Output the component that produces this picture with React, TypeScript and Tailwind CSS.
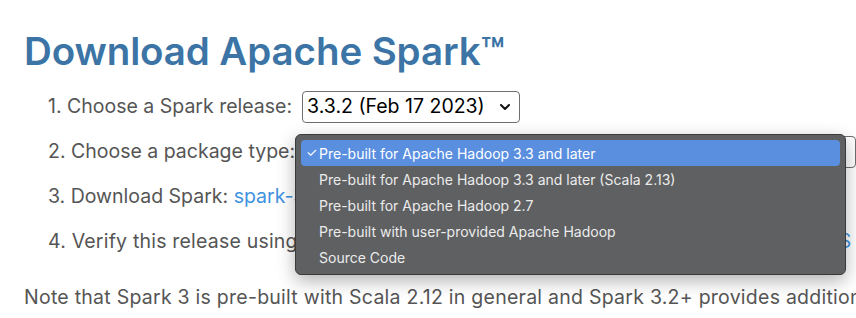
import React from "react";

const items = [
  "Pre-built for Apache Hadoop 3.3 and later",
  "Pre-built for Apache Hadoop 3.3 and later (Scala 2.13)",
  "Pre-built for Apache Hadoop 2.7",
  "Pre-built with user-provided Apache Hadoop",
  "Source Code",
];

function Chevron() {
  return (
    <svg width="12" height="8" viewBox="0 0 12 8" className="ml-auto">
      <path d="M2 2 L6 6 L10 2" fill="none" stroke="#111" strokeWidth="2" strokeLinecap="round" strokeLinejoin="round" />
    </svg>
  );
}

export default function App() {
  return (
    <div
      className="relative w-[856px] h-[318px] overflow-hidden bg-white whitespace-nowrap"
      style={{ fontFamily: "Inter, 'Open Sans', sans-serif" }}
    >
      <div className="pl-6 pt-[27px]">
        <h1 className="text-[38.5px] leading-[48px] font-semibold text-[#3b74a5] tracking-[-0.1px]">
          Download Apache Spark™
        </h1>
        <ol className="mt-[9px] pl-[24px] text-[19.5px] text-[#555]">
          <li className="h-[45px] flex items-center">
            <span>1. Choose a Spark release:</span>
            <div className="ml-[10px] w-[218px] h-[32px] border border-[#6f6f6f] rounded-[4px] flex items-center pl-[4px] pr-[8px] text-black">
              <span>3.3.2 (Feb 17 2023)</span>
              <Chevron />
            </div>
          </li>
          <li className="h-[45px] flex items-center">
            <span>2. Choose a package type:</span>
            <div className="ml-[8px] w-[554px] h-[32px] border border-[#6f6f6f] rounded-[4px] flex items-center pl-[4px] pr-[8px] text-black">
              <span>Pre-built for Apache Hadoop 3.3 and later</span>
            </div>
          </li>
          <li className="h-[45px] flex items-center">
            <span>3. Download Spark:&nbsp;</span>
            <span className="text-[#4192e0]">spark-3.3.2-bin-hadoop3.tgz</span>
          </li>
          <li className="h-[45px] flex items-center tracking-[0.2px]">
            <span>4. Verify this release using the 3.3.2&nbsp;</span>
            <span className="text-[#4192e0]">signatures</span>
            <span>,&nbsp;</span>
            <span className="text-[#4192e0]">checksums</span>
            <span>&nbsp;and&nbsp;</span>
            <span className="text-[#4192e0]">project release KEYS</span>
            <span>&nbsp;by following these procedures.</span>
          </li>
        </ol>
        <p className="mt-[20px] leading-[27px] text-[19.5px] text-[#555] tracking-[0.25px]">
          Note that Spark 3 is pre-built with Scala 2.12 in general and Spark 3.2+ provides additional pre-built distribution with Scala 2.13.
        </p>
      </div>

      <div
        className="absolute left-[295px] top-[134px] w-[551px] h-[141px] rounded-[6px] bg-[#5e6062] border border-[#3a3a3a] shadow-[0_6px_18px_rgba(0,0,0,0.3)] pt-[5px] px-[5px] text-[14px] text-[#ececec]"
        style={{ fontFamily: "Inter, 'Open Sans', sans-serif" }}
      >
        {items.map((t, i) => (
          <div
            key={t}
            className={
              i === 0
                ? "h-[26px] flex items-center rounded-[4px] bg-[#5a8fe0] text-white"
                : "h-[26px] flex items-center"
            }
          >
            <span className="w-[18px] pl-[5px] text-[13px]">{i === 0 ? "✓" : ""}</span>
            <span>{t}</span>
          </div>
        ))}
      </div>
    </div>
  );
}
